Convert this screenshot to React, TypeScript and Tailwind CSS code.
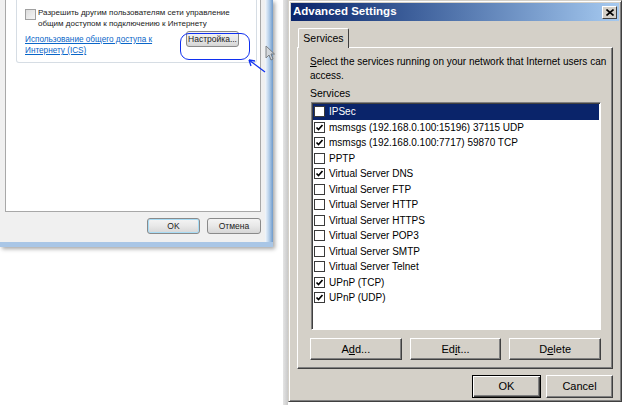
import React from "react";

const services: { name: string; checked: boolean; selected?: boolean }[] = [
  { name: "IPSec", checked: false, selected: true },
  { name: "msmsgs (192.168.0.100:15196) 37115 UDP", checked: true },
  { name: "msmsgs (192.168.0.100:7717) 59870 TCP", checked: true },
  { name: "PPTP", checked: false },
  { name: "Virtual Server DNS", checked: true },
  { name: "Virtual Server FTP", checked: false },
  { name: "Virtual Server HTTP", checked: false },
  { name: "Virtual Server HTTPS", checked: false },
  { name: "Virtual Server POP3", checked: false },
  { name: "Virtual Server SMTP", checked: false },
  { name: "Virtual Server Telnet", checked: false },
  { name: "UPnP (TCP)", checked: true },
  { name: "UPnP (UDP)", checked: true },
];

function ListCheck({ checked }: { checked: boolean }) {
  return (
    <span className="flex h-[11px] w-[11px] shrink-0 items-center justify-center border border-[#3a3a3a] bg-white">
      {checked && (
        <svg width="9" height="9" viewBox="0 0 9 9">
          <path d="M1.5 4.5 L3.5 6.5 L7.5 2" fill="none" stroke="#000" strokeWidth="1.7" />
        </svg>
      )}
    </span>
  );
}

function ClassicButton({
  children,
  className = "",
  isDefault = false,
}: {
  children: React.ReactNode;
  className?: string;
  isDefault?: boolean;
}) {
  return (
    <div
      className={`flex items-center justify-center bg-[#d4d0c8] text-[11px] text-black ${
        isDefault
          ? "border border-black shadow-[inset_1px_1px_#fff,inset_-1px_-1px_#404040,inset_-2px_-2px_#808080]"
          : "border border-t-white border-l-white border-r-[#404040] border-b-[#404040] shadow-[inset_-1px_-1px_#808080]"
      } ${className}`}
    >
      {children}
    </div>
  );
}

function Win7Button({ children, className = "" }: { children: React.ReactNode; className?: string }) {
  return (
    <div
      className={`flex items-center justify-center rounded-[3px] border border-[#8a8a8a] bg-gradient-to-b from-[#f4f4f4] via-[#e8e8e8] to-[#d6d6d6] text-[8.5px] text-[#222] ${className}`}
    >
      {children}
    </div>
  );
}

function SharingWindow() {
  return (
    <div className="flex h-[247px] w-[273px] shrink-0 shadow-[2px_2px_4px_rgba(0,0,0,0.35)]">
      <div className="flex flex-1 flex-col border-b-[5px] border-[#a9c6e6] bg-[#f0f0f0] pl-[5px] pr-[4px]">
        <div className="h-[212px] border border-t-0 border-[#a8a8a8] bg-white pl-[10px] pr-[3px]">
          <div className="flex h-[63px] flex-col rounded-b-[3px] border border-t-0 border-[#d6dde4] pl-[8px] pr-[6px] pt-[7px]">
            <div className="flex gap-[2px]">
              <span className="mt-[2px] h-[11px] w-[11px] shrink-0 border border-[#a0a0a0] bg-gradient-to-br from-[#dcdcdc] to-[#f6f6f6]" />
              <span className="whitespace-nowrap text-[8px] leading-[11px] text-[#222]">
                Разрешить другим пользователям сети управление
                <br />
                общим доступом к подключению к Интернету
              </span>
            </div>
            <div className="mt-[5px] flex items-start justify-between">
              <span className="whitespace-nowrap text-[8.2px] leading-[11px] text-[#0a66c8] underline">
                Использование общего доступа к
                <br />
                Интернету (ICS)
              </span>
              <Win7Button className="mr-[11px] mt-[-3px] h-[16px] w-[53px]">Настройка...</Win7Button>
            </div>
          </div>
        </div>
        <div className="flex justify-end gap-[7px] pt-[6px]">
          <Win7Button className="h-[16px] w-[53px] border-[#3c9ad9] shadow-[inset_0_0_0_1px_#a8dcf5]">OK</Win7Button>
          <Win7Button className="h-[16px] w-[54px]">Отмена</Win7Button>
        </div>
      </div>
      <div className="w-[8px] border-b-[5px] border-[#a9c6e6] bg-gradient-to-r from-[#f4f8fc] via-[#b7d0ea] to-[#6e9acb]" />
    </div>
  );
}

function AdvancedSettings() {
  return (
    <div className="flex h-[402px] w-[334px] shrink-0 flex-col border border-t-[#d4d0c8] border-l-[#d4d0c8] border-r-[#404040] border-b-[#404040] bg-[#d4d0c8] p-[2px] shadow-[inset_1px_1px_#fff,inset_-1px_-1px_#808080] font-['Liberation_Sans',Arial,sans-serif]">
      <div className="flex h-[18px] items-center justify-between bg-gradient-to-r from-[#0a246a] to-[#a6caf0] pl-[2px] pr-[2px]">
        <span className="text-[11.5px] font-bold text-white">Advanced Settings</span>
        <div className="flex h-[13px] w-[15px] items-center justify-center border border-t-white border-l-white border-r-[#404040] border-b-[#404040] bg-[#d4d0c8]">
          <svg width="8" height="7" viewBox="0 0 8 7">
            <path d="M0.5 0.5 L7.5 6.5 M7.5 0.5 L0.5 6.5" stroke="#000" strokeWidth="1.6" />
          </svg>
        </div>
      </div>

      <div className="flex flex-1 flex-col px-[6px] pt-[7px]">
        <div className="relative z-10 mb-[-1px] ml-[1px] flex h-[20px] w-[51px] items-center justify-center rounded-t-[2px] border border-b-0 border-t-white border-l-white border-r-[#404040] bg-[#d4d0c8] text-[10.5px] text-black">
          Services
        </div>
        <div className="flex h-[322px] flex-col border border-t-white border-l-white border-r-[#404040] border-b-[#404040] pl-[12px] pr-[11px] pt-[7px] shadow-[inset_-1px_-1px_#808080]">
          <p className="whitespace-nowrap text-[10px] leading-[14px] text-black">
            <span className="underline">S</span>elect the services running on your network that Internet users can
            <br />
            access.
          </p>
          <p className="mt-[3px] text-[10.5px] leading-[14px] text-black">Services</p>
          <div className="mt-[2px] ml-[1px] flex h-[228px] flex-col border border-t-[#808080] border-l-[#808080] border-r-white border-b-white bg-white p-[1px] shadow-[inset_1px_1px_#404040]">
            {services.map((s) => (
              <div
                key={s.name}
                className={`flex h-[15.5px] items-center gap-[4px] pl-[1px] text-[10px] ${
                  s.selected ? "bg-[#0a246a] text-white" : "text-black"
                }`}
              >
                <ListCheck checked={s.checked} />
                <span>{s.name}</span>
              </div>
            ))}
          </div>
          <div className="mt-[8px] flex gap-[8px]">
            <ClassicButton className="h-[22px] w-[92px]">
              <span>
                A<span className="underline">d</span>d...
              </span>
            </ClassicButton>
            <ClassicButton className="h-[22px] w-[92px]">
              <span>
                Ed<span className="underline">i</span>t...
              </span>
            </ClassicButton>
            <ClassicButton className="h-[22px] w-[92px]">
              <span>
                D<span className="underline">e</span>lete
              </span>
            </ClassicButton>
          </div>
        </div>
        <div className="mt-[6px] flex justify-end gap-[5px]">
          <ClassicButton isDefault className="h-[23px] w-[69px]">
            OK
          </ClassicButton>
          <ClassicButton className="h-[23px] w-[67px]">Cancel</ClassicButton>
        </div>
      </div>
    </div>
  );
}

export default function App() {
  return (
    <div className="relative flex h-[405px] w-[624px] overflow-hidden bg-white font-['Liberation_Sans',Arial,sans-serif]">
      <SharingWindow />
      <div className="w-[10px] shrink-0" />
      <div className="w-[5px] shrink-0 bg-gradient-to-r from-[#e4e4e4] to-[#c9c9c9]" />
      <AdvancedSettings />

      {/* annotation: ring around the settings button and arrow */}
      <div className="absolute left-[180px] top-[33px] h-[27px] w-[70px] rounded-[9px] border-[1.5px] border-[#1030f0]" />
      <svg className="absolute left-[244px] top-[56px]" width="26" height="20" viewBox="0 0 26 20">
        <path d="M21 16 L5 4" stroke="#1030f0" strokeWidth="1.3" fill="none" />
        <path d="M5 4 L11 5 M5 4 L7 10" stroke="#1030f0" strokeWidth="1.3" fill="none" />
      </svg>

      {/* mouse pointer */}
      <svg className="absolute left-[265px] top-[45px] opacity-80" width="10" height="17" viewBox="0 0 10 17">
        <path d="M1 1 L1 13 L4 10 L6 15 L8 14 L6 9 L9.5 9 Z" fill="#d8d8d8" stroke="#6b6b6b" strokeWidth="1" />
      </svg>
    </div>
  );
}
